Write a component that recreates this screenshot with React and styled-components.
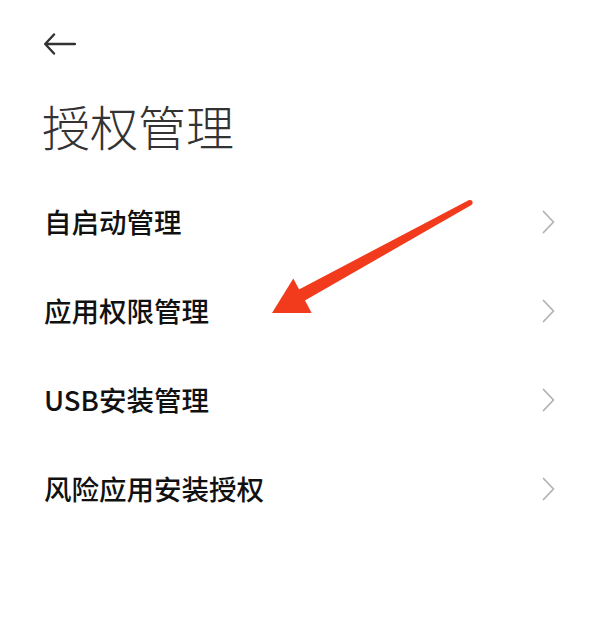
import React from "react";
import styled, { createGlobalStyle } from "styled-components";

const Global = createGlobalStyle`
  html, body { margin: 0; padding: 0; background: #ffffff; }
  body { font-family: "Noto Sans CJK SC", "Noto Sans", sans-serif; }
`;

const Page = styled.div`
  position: relative;
  width: 600px;
  height: 640px;
  background: #ffffff;
  overflow: hidden;
`;

const Header = styled.div`
  height: 88px;
  display: flex;
  align-items: center;
  padding: 0 0 0 44px;
  box-sizing: border-box;
`;

const BackButton = styled.button`
  border: 0;
  background: none;
  padding: 0;
  width: 32px;
  height: 22px;
  display: flex;
  align-items: center;
  justify-content: center;
  cursor: pointer;
`;

const Title = styled.h1`
  margin: 7px 0 0 0;
  padding-left: 42px;
  font-size: 48px;
  line-height: 60px;
  font-weight: 300;
  color: #333333;
`;

const List = styled.div`
  margin-top: 22px;
  display: flex;
  flex-direction: column;
`;

const Row = styled.div`
  height: 89px;
  display: flex;
  align-items: center;
  justify-content: space-between;
  padding: 0 45px 0 44px;
`;

const Label = styled.span`
  font-size: 27.5px;
  font-weight: 500;
  color: #111111;
  line-height: 1;
`;

const Chevron = styled.svg`
  width: 13px;
  height: 24px;
  flex: none;
`;

const Overlay = styled.svg`
  position: absolute;
  left: 0;
  top: 0;
  width: 600px;
  height: 640px;
  pointer-events: none;
`;

const items = ["自启动管理", "应用权限管理", "USB安装管理", "风险应用安装授权"];

export default function App() {
  return (
    <Page>
      <Global />
      <Header>
        <BackButton aria-label="back">
          <svg width="32" height="22" viewBox="0 0 32 22">
            <path
              d="M31 11H2M10 1.5L1.2 11L10 20.5"
              fill="none"
              stroke="#333"
              strokeWidth="2.4"
              strokeLinecap="round"
              strokeLinejoin="round"
            />
          </svg>
        </BackButton>
      </Header>
      <Title>授权管理</Title>
      <List>
        {items.map((t) => (
          <Row key={t}>
            <Label>{t}</Label>
            <Chevron viewBox="0 0 13 24">
              <path
                d="M1.5 1.5L11.5 12L1.5 22.5"
                fill="none"
                stroke="#b3b3b3"
                strokeWidth="1.8"
                strokeLinecap="round"
                strokeLinejoin="round"
              />
            </Chevron>
          </Row>
        ))}
      </List>
      <Overlay viewBox="0 0 600 640">
        <polygon
          points="471.4,205 468.6,200.2 298,290 304,301"
          fill="#f23b1c"
        />
        <circle cx="470" cy="202.6" r="2.6" fill="#f23b1c" />
        <polygon points="272,313 293.3,278.5 311.7,313" fill="#f23b1c" />
      </Overlay>
    </Page>
  );
}
